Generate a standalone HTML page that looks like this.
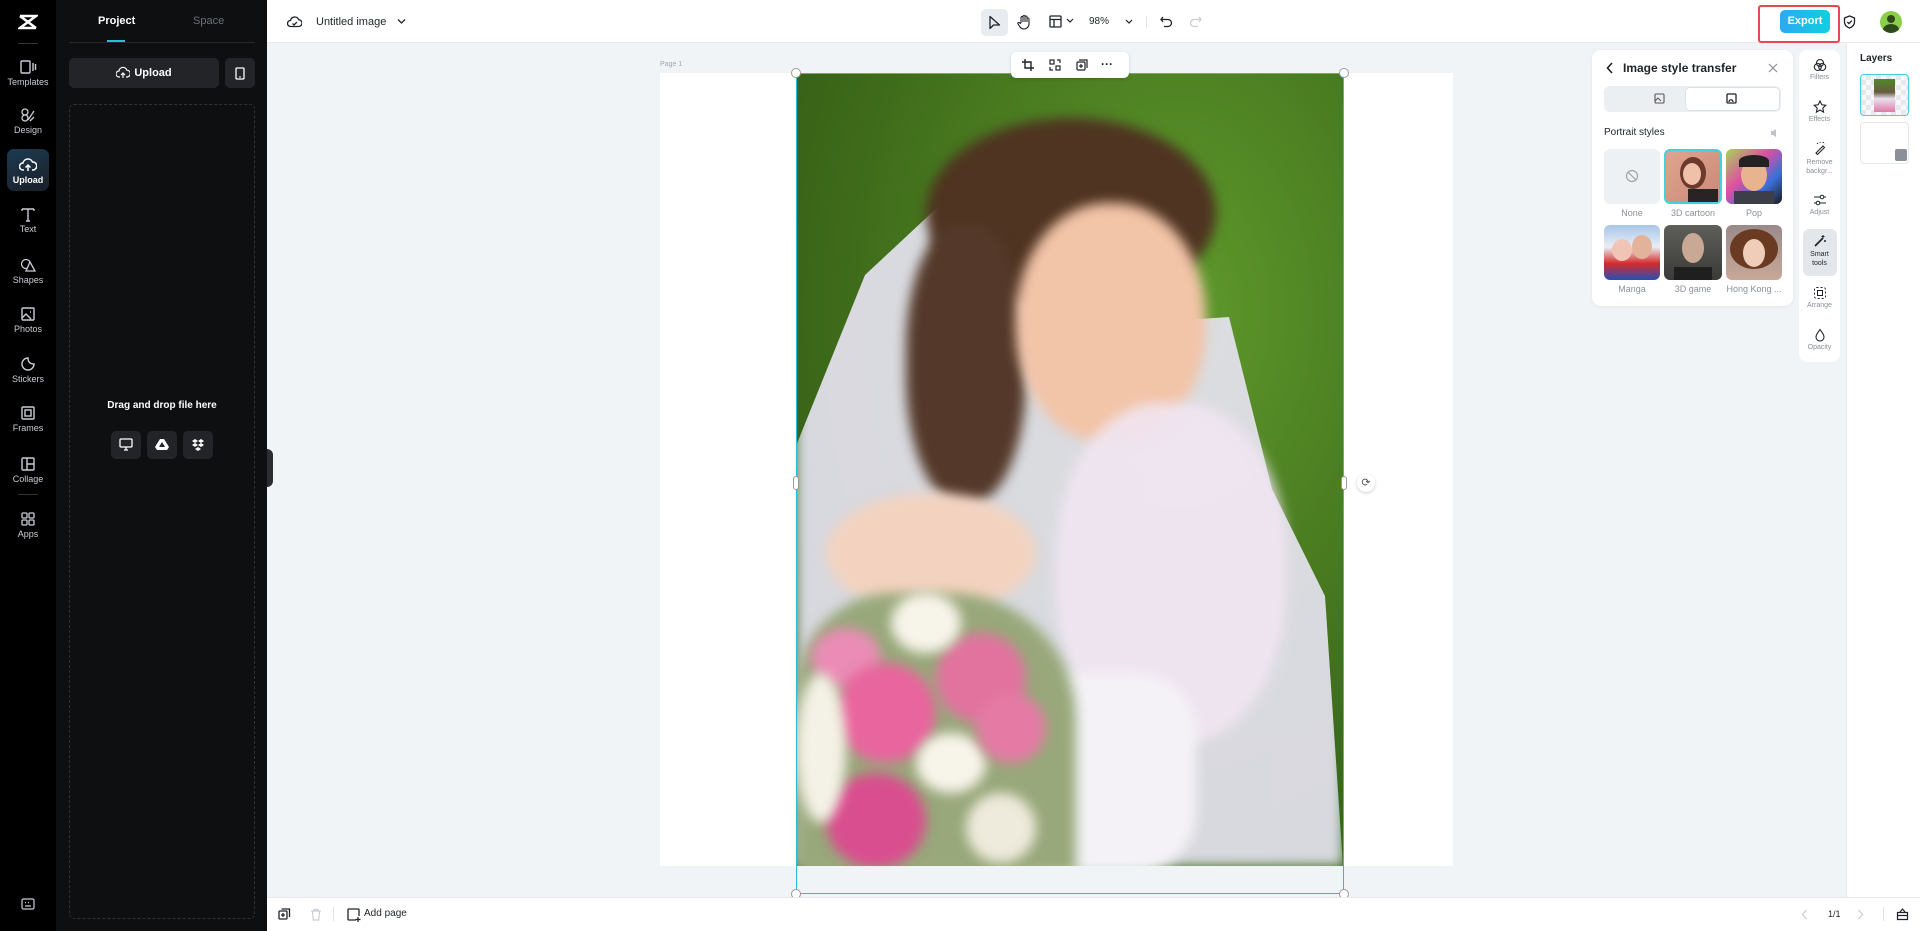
<!DOCTYPE html>
<html><head><meta charset="utf-8"><style>
*{box-sizing:border-box;margin:0;padding:0}
body{width:1920px;height:931px;overflow:hidden;position:relative;background:#f1f4f7;font-family:"Liberation Sans",sans-serif;color:#1f2329}
.a{position:absolute}
.rail{left:0;top:0;width:56px;height:931px;background:#000}
.ri{position:absolute;left:0;width:56px;text-align:center;color:#c9cdd4;font-size:9px}
.ri svg{display:block;margin:0 auto 2px}
.panel{left:56px;top:0;width:211px;height:931px;background:#0e0f11}
.top{left:267px;top:0;width:1653px;height:43px;background:#fff;border-bottom:1px solid #e8eaed}
.tl{position:absolute;text-align:center;font-size:7px;color:#8a8f99;width:41px;left:0}
.tl svg{display:block;margin:0 auto 2px}
.tile{position:absolute;width:56px;height:55px;border-radius:6px;overflow:hidden}
.lab{position:absolute;font-size:9px;color:#8a8f99;width:60px;text-align:center}
.blur{position:absolute;filter:blur(6px)}
</style></head><body>

<!-- left rail -->
<div class="a rail">
  <svg class="a" style="left:18px;top:14px" width="20" height="16" viewBox="0 0 20 16"><path d="M2 2h16L2 14h16M2 2l16 12" stroke="#fff" stroke-width="2.6" fill="none"/></svg>
  <div class="a" style="left:18px;top:43px;width:20px;height:1px;background:#333"></div>
  <div class="ri" style="top:59px"><svg width="18" height="16" viewBox="0 0 18 16"><rect x="2" y="2" width="9" height="12" rx="1" stroke="#c9cdd4" stroke-width="1.4" fill="none"/><path d="M14 4v8M16.5 5v6" stroke="#c9cdd4" stroke-width="1.4"/></svg>Templates</div>
  <div class="ri" style="top:107px"><svg width="18" height="16" viewBox="0 0 18 16"><circle cx="6" cy="5" r="3" stroke="#c9cdd4" stroke-width="1.3" fill="none"/><circle cx="6" cy="11" r="3" stroke="#c9cdd4" stroke-width="1.3" fill="none"/><path d="M9 13l6-9M11 14l4-4" stroke="#c9cdd4" stroke-width="1.3"/></svg>Design</div>
  <div class="a" style="left:7px;top:149px;width:42px;height:42px;border-radius:7px;background:linear-gradient(160deg,#1d3a52,#1a1f27)"></div>
  <div class="ri" style="top:157px;color:#fff;font-weight:bold"><svg width="18" height="16" viewBox="0 0 18 16"><path d="M5 13H4a3.5 3.5 0 010-7 5 5 0 019.5-1A3.5 3.5 0 0114 13h-1M9 14V8M6.5 10.5L9 8l2.5 2.5" stroke="#fff" stroke-width="1.5" fill="none"/></svg>Upload</div>
  <div class="ri" style="top:206px"><svg width="18" height="16" viewBox="0 0 18 16"><path d="M3 3h12M9 3v12M3 3v2M15 3v2M7 15h4" stroke="#c9cdd4" stroke-width="1.4" fill="none"/></svg>Text</div>
  <div class="ri" style="top:257px"><svg width="18" height="16" viewBox="0 0 18 16"><circle cx="7" cy="7" r="4.5" stroke="#c9cdd4" stroke-width="1.3" fill="none"/><path d="M11 5l5 9H7z" stroke="#c9cdd4" stroke-width="1.3" fill="#000"/></svg>Shapes</div>
  <div class="ri" style="top:306px"><svg width="18" height="16" viewBox="0 0 18 16"><rect x="3" y="2" width="12" height="12" rx="1" stroke="#c9cdd4" stroke-width="1.4" fill="none"/><path d="M3 12l4-4 5 5M11 6h1" stroke="#c9cdd4" stroke-width="1.4" fill="none"/></svg>Photos</div>
  <div class="ri" style="top:356px"><svg width="18" height="16" viewBox="0 0 18 16"><path d="M15 8A6 6 0 119 2c0 4 2 6 6 6z" stroke="#c9cdd4" stroke-width="1.4" fill="none"/></svg>Stickers</div>
  <div class="ri" style="top:405px"><svg width="18" height="16" viewBox="0 0 18 16"><rect x="3" y="2" width="12" height="12" rx="1" stroke="#c9cdd4" stroke-width="1.4" fill="none"/><rect x="6" y="5" width="6" height="6" stroke="#c9cdd4" stroke-width="1.4" fill="none"/></svg>Frames</div>
  <div class="ri" style="top:456px"><svg width="18" height="16" viewBox="0 0 18 16"><rect x="3" y="2" width="12" height="12" rx="1" stroke="#c9cdd4" stroke-width="1.4" fill="none"/><path d="M8 2v12M8 8h7" stroke="#c9cdd4" stroke-width="1.4"/></svg>Collage</div>
  <div class="a" style="left:18px;top:494px;width:20px;height:1px;background:#333"></div>
  <div class="ri" style="top:511px"><svg width="18" height="16" viewBox="0 0 18 16"><rect x="3" y="2" width="5" height="5" rx="1" stroke="#c9cdd4" stroke-width="1.3" fill="none"/><rect x="10" y="2" width="5" height="5" rx="1" stroke="#c9cdd4" stroke-width="1.3" fill="none"/><rect x="3" y="9" width="5" height="5" rx="1" stroke="#c9cdd4" stroke-width="1.3" fill="none"/><rect x="10" y="9" width="5" height="5" rx="1" stroke="#c9cdd4" stroke-width="1.3" fill="none"/></svg>Apps</div>
  <svg class="a" style="left:21px;top:898px" width="14" height="12" viewBox="0 0 14 12"><rect x="1" y="1" width="12" height="10" rx="1.5" stroke="#c9cdd4" stroke-width="1.2" fill="none"/><path d="M4 8h6M4 4.5h1M7 4.5h1M10 4.5h0" stroke="#c9cdd4" stroke-width="1.2"/></svg>
</div>

<!-- panel -->
<div class="a panel">
  <div class="a" style="left:42px;top:15px;font-size:11px;font-weight:bold;color:#fff">Project</div>
  <div class="a" style="left:137px;top:15px;font-size:11px;color:#6b7078">Space</div>
  <div class="a" style="left:51px;top:40px;width:18px;height:2px;background:#22c1d6"></div>
  <div class="a" style="left:13px;top:42px;width:186px;height:1px;background:#26282c"></div>
  <div class="a" style="left:13px;top:58px;width:150px;height:30px;border-radius:5px;background:#222428;color:#fff;font-size:11px;font-weight:bold;text-align:center;line-height:30px">
    <svg style="vertical-align:-3px;margin-right:4px" width="14" height="13" viewBox="0 0 14 13"><path d="M4 11H3a3 3 0 010-6 4 4 0 017.8-.8A3 3 0 0111 11h-1M7 12V7M5 9l2-2 2 2" stroke="#fff" stroke-width="1.2" fill="none"/></svg>Upload</div>
  <div class="a" style="left:169px;top:58px;width:30px;height:30px;border-radius:5px;background:#222428"><svg class="a" style="left:10px;top:9px" width="10" height="13" viewBox="0 0 10 13"><rect x="1" y="1" width="8" height="11" rx="1" stroke="#fff" stroke-width="1.3" fill="none"/><path d="M4 10h2" stroke="#fff"/></svg></div>
  <div class="a" style="left:13px;top:104px;width:186px;height:815px;border:1px dashed #2f3237;border-radius:5px"></div>
  <div class="a" style="left:13px;top:400px;width:186px;text-align:center;color:#fff;font-size:10px;font-weight:bold">Drag and drop file here</div>
  <div class="a" style="left:55px;top:431px;width:30px;height:28px;border-radius:5px;background:#222428"><svg class="a" style="left:8px;top:7px" width="14" height="13" viewBox="0 0 14 13"><rect x="1" y="1" width="12" height="8" rx="1" stroke="#fff" stroke-width="1.3" fill="none"/><path d="M5 12h4M7 9v3" stroke="#fff" stroke-width="1.3"/></svg></div>
  <div class="a" style="left:91px;top:431px;width:30px;height:28px;border-radius:5px;background:#222428"><svg class="a" style="left:8px;top:7px" width="14" height="13" viewBox="0 0 14 13"><path d="M5 1h4l5 8-2 3H2L0 9z" fill="#fff"/><path d="M7 4l-3 5h6z" fill="#222428"/></svg></div>
  <div class="a" style="left:127px;top:431px;width:30px;height:28px;border-radius:5px;background:#222428"><svg class="a" style="left:8px;top:7px" width="14" height="13" viewBox="0 0 14 13"><path d="M4 1l3 2-3 2-3-2zM10 1l3 2-3 2-3-2zM4 5l3 2-3 2-3-2zM10 5l3 2-3 2-3-2zM7 9l3 2-3 2-3-2z" fill="#fff"/></svg></div>
</div>
<div class="a" style="left:267px;top:449px;width:6px;height:38px;background:#2a2c30;border-radius:0 6px 6px 0"></div>

<!-- top bar -->
<div class="a top">
  <svg class="a" style="left:20px;top:15px" width="15" height="13" viewBox="0 0 15 13"><path d="M4 11.5H3.5a3 3 0 010-6 4.3 4.3 0 018.2-.8A3 3 0 0111.5 11.5zM5.5 8.5l1.5 1.5 3-3" stroke="#1f2329" stroke-width="1.3" fill="none"/></svg>
  <div class="a" style="left:49px;top:16px;font-size:11px;color:#1f2329">Untitled image</div>
  <svg class="a" style="left:130px;top:18px" width="9" height="7" viewBox="0 0 9 7"><path d="M1 1.5l3.5 3.5 3.5-3.5" stroke="#1f2329" stroke-width="1.3" fill="none"/></svg>
  <div class="a" style="left:714px;top:9px;width:27px;height:27px;border-radius:5px;background:#e8ebef"></div>
  <svg class="a" style="left:721px;top:15px" width="13" height="15" viewBox="0 0 13 15"><path d="M2 1.5v12l3.5-3.5h6z" stroke="#1f2329" stroke-width="1.3" fill="none" stroke-linejoin="round"/></svg>
  <svg class="a" style="left:750px;top:14px" width="14" height="16" viewBox="0 0 14 16"><path d="M4 9V3.5a1 1 0 012 0V8M6 7V2.5a1 1 0 012 0V8M8 7V3a1 1 0 012 0v5M10 7V5a1 1 0 012 0v5a5 5 0 01-5 5 5 5 0 01-4-2l-2-3a1 1 0 011.5-1.3L4 10" stroke="#1f2329" stroke-width="1.1" fill="none"/></svg>
  <svg class="a" style="left:782px;top:15px" width="13" height="13" viewBox="0 0 13 13"><rect x="1" y="1" width="11" height="11" rx="1" stroke="#1f2329" stroke-width="1.3" fill="none"/><path d="M1 4.5h11M5 4.5V12" stroke="#1f2329" stroke-width="1.3"/></svg>
  <svg class="a" style="left:799px;top:18px" width="8" height="6" viewBox="0 0 8 6"><path d="M1 1l3 3 3-3" stroke="#1f2329" stroke-width="1.2" fill="none"/></svg>
  <div class="a" style="left:822px;top:16px;font-size:10px;color:#1f2329">98%</div>
  <svg class="a" style="left:858px;top:19px" width="8" height="6" viewBox="0 0 8 6"><path d="M1 1l3 3 3-3" stroke="#1f2329" stroke-width="1.2" fill="none"/></svg>
  <div class="a" style="left:879px;top:16px;width:1px;height:12px;background:#e0e3e7"></div>
  <svg class="a" style="left:893px;top:16px" width="13" height="12" viewBox="0 0 13 12"><path d="M3 1L1 3.5 3 6M1 3.5h7a3.5 3.5 0 010 7H4" stroke="#1f2329" stroke-width="1.3" fill="none"/></svg>
  <svg class="a" style="left:922px;top:16px" width="13" height="12" viewBox="0 0 13 12"><path d="M10 1l2 2.5L10 6M12 3.5H5a3.5 3.5 0 000 7h4" stroke="#c9cdd4" stroke-width="1.3" fill="none"/></svg>
  <div class="a" style="left:1491px;top:5px;width:82px;height:38px;border:2px solid #e8474c;border-radius:3px"></div>
  <div class="a" style="left:1513px;top:10px;width:50px;height:23px;border-radius:5px;background:linear-gradient(90deg,#2fa9f0,#0fd0e0);color:#fff;font-size:11px;font-weight:bold;text-align:center;line-height:23px">Export</div>
  <svg class="a" style="left:1576px;top:15px" width="13" height="14" viewBox="0 0 13 14"><path d="M6.5 1L1.5 3v4c0 3 2.2 5 5 6 2.8-1 5-3 5-6V3z" stroke="#1f2329" stroke-width="1.3" fill="none"/><path d="M4.3 7l1.6 1.6 3-3" stroke="#1f2329" stroke-width="1.3" fill="none"/></svg>
  <div class="a" style="left:1613px;top:11px;width:22px;height:22px;border-radius:50%;background:#8bce4a;overflow:hidden"><div class="a" style="left:7px;top:4px;width:8px;height:8px;border-radius:50%;background:#2e4a1a"></div><div class="a" style="left:3px;top:13px;width:16px;height:12px;border-radius:50%;background:#2e4a1a"></div></div>
</div>

<!-- page -->
<div class="a" style="left:660px;top:61px;font-size:7px;color:#a0a5ad">Page 1</div>
<div class="a" style="left:660px;top:73px;width:793px;height:793px;background:#fff"></div>
<!-- image -->
<div class="a" style="left:796px;top:73px;width:547px;height:793px;overflow:hidden;background:radial-gradient(ellipse at 70% 30%,#5f9a2c,#3f6c1a 60%,#2f5414)">
  <div class="blur" style="left:0;top:0;width:547px;height:793px;background:#e6e3f0;opacity:.92;clip-path:polygon(0 373px,69px 202px,144px 132px,273px 255px,433px 244px,476px 416px,529px 523px,547px 793px,0 793px)"></div>
  <div class="blur" style="left:130px;top:45px;width:290px;height:190px;border-radius:50%;background:#4f3421"></div>
  <div class="blur" style="left:110px;top:150px;width:120px;height:280px;border-radius:45%;background:#54392a"></div>
  <div class="blur" style="left:220px;top:130px;width:190px;height:240px;border-radius:48%;background:#f2c4a8"></div>
  <div class="blur" style="left:30px;top:420px;width:210px;height:120px;border-radius:50%;background:#f3d3c0"></div>
  <div class="blur" style="left:260px;top:330px;width:230px;height:340px;border-radius:45%;background:#f1e6f2;opacity:.9"></div>
  <div class="blur" style="left:200px;top:600px;width:200px;height:200px;border-radius:30%;background:#f4f2f6"></div>
  <div class="blur" style="left:0;top:520px;width:280px;height:280px;border-radius:35% 45% 0 0;background:#98a87a"></div>
  <div class="blur" style="left:15px;top:555px;width:70px;height:60px;border-radius:50%;background:#ea8cb5"></div>
  <div class="blur" style="left:40px;top:590px;width:100px;height:100px;border-radius:50%;background:#e9659e"></div>
  <div class="blur" style="left:140px;top:560px;width:90px;height:90px;border-radius:50%;background:#e2739f"></div>
  <div class="blur" style="left:30px;top:700px;width:100px;height:95px;border-radius:50%;background:#d94e8e"></div>
  <div class="blur" style="left:0;top:600px;width:50px;height:150px;border-radius:50%;background:#f4f1e6"></div>
  <div class="blur" style="left:95px;top:520px;width:70px;height:60px;border-radius:50%;background:#f7f4ea"></div>
  <div class="blur" style="left:120px;top:660px;width:70px;height:60px;border-radius:50%;background:#f7f4ea"></div>
  <div class="blur" style="left:170px;top:720px;width:70px;height:70px;border-radius:50%;background:#eeeadc"></div>
  <div class="blur" style="left:180px;top:620px;width:70px;height:70px;border-radius:50%;background:#e57aa5"></div>
</div>
<!-- selection -->
<div class="a" style="left:796px;top:73px;width:548px;height:821px;border:1px solid #22c1d6"></div>
<div class="a" style="left:791px;top:68px;width:10px;height:10px;border-radius:50%;background:#fff;border:1px solid #999"></div>
<div class="a" style="left:1339px;top:68px;width:10px;height:10px;border-radius:50%;background:#fff;border:1px solid #999"></div>
<div class="a" style="left:793px;top:476px;width:6px;height:14px;border-radius:3px;background:#fff;border:1px solid #999"></div>
<div class="a" style="left:1341px;top:476px;width:6px;height:14px;border-radius:3px;background:#fff;border:1px solid #999"></div>
<div class="a" style="left:1357px;top:474px;width:18px;height:18px;border-radius:50%;background:#fff;box-shadow:0 1px 3px rgba(0,0,0,.2);font-size:11px;text-align:center;line-height:18px;color:#555">⟳</div>
<div class="a" style="left:791px;top:889px;width:10px;height:10px;border-radius:50%;background:#fff;border:1px solid #999"></div>
<div class="a" style="left:1339px;top:889px;width:10px;height:10px;border-radius:50%;background:#fff;border:1px solid #999"></div>
<!-- float toolbar -->
<div class="a" style="left:1011px;top:52px;width:118px;height:26px;background:#fff;border-radius:5px;box-shadow:0 1px 3px rgba(0,0,0,.15)">
  <svg class="a" style="left:11px;top:7px" width="12" height="12" viewBox="0 0 12 12"><path d="M3 0v9h9M0 3h9v9" stroke="#1f2329" stroke-width="1.4" fill="none"/></svg>
  <svg class="a" style="left:38px;top:7px" width="12" height="12" viewBox="0 0 12 12"><rect x="1" y="1" width="4" height="4" stroke="#1f2329" stroke-width="1.2" fill="none"/><rect x="7" y="7" width="4" height="4" stroke="#1f2329" stroke-width="1.2" fill="none"/><path d="M8 1h3v3M1 8v3h3" stroke="#1f2329" stroke-width="1.2" fill="none"/></svg>
  <svg class="a" style="left:65px;top:7px" width="12" height="12" viewBox="0 0 12 12"><rect x="1" y="3" width="8" height="8" rx="1" stroke="#1f2329" stroke-width="1.2" fill="none"/><path d="M3 1h8v8M5 5v4M3 7h4" stroke="#1f2329" stroke-width="1.2" fill="none"/></svg>
  <div class="a" style="left:90px;top:5px;font-size:12px;font-weight:bold;color:#1f2329">···</div>
</div>

<!-- style panel -->
<div class="a" style="left:1592px;top:50px;width:201px;height:256px;background:#fff;border-radius:9px;box-shadow:0 1px 4px rgba(0,0,0,.06)">
  <svg class="a" style="left:14px;top:12px" width="8" height="12" viewBox="0 0 8 12"><path d="M6 1L1.5 6 6 11" stroke="#1f2329" stroke-width="1.6" fill="none"/></svg>
  <div class="a" style="left:31px;top:11px;font-size:12px;font-weight:bold;color:#1f2329">Image style transfer</div>
  <svg class="a" style="left:176px;top:13px" width="10" height="10" viewBox="0 0 10 10"><path d="M1 1l8 8M9 1l-8 8" stroke="#8a8f99" stroke-width="1.2"/></svg>
  <div class="a" style="left:12px;top:36px;width:177px;height:26px;border-radius:6px;background:#eceff2"></div>
  <div class="a" style="left:93px;top:37px;width:95px;height:24px;border-radius:5px;background:#fff;border:1px solid #dde1e5"></div>
  <svg class="a" style="left:62px;top:43px" width="12" height="12" viewBox="0 0 12 12"><rect x="1" y="1" width="9" height="9" rx="1" stroke="#555" stroke-width="1.1" fill="none"/><path d="M1 8l3-3 3 3" stroke="#555" fill="none"/></svg>
  <svg class="a" style="left:134px;top:43px" width="12" height="12" viewBox="0 0 12 12"><rect x="1" y="1" width="9" height="9" rx="1" stroke="#1f2329" stroke-width="1.3" fill="none"/><path d="M3 9c0-3 4-3 4 0M5 5h0" stroke="#1f2329" stroke-width="1.3" fill="none"/></svg>
  <div class="a" style="left:12px;top:77px;font-size:10px;color:#1f2329">Portrait styles</div>
  <svg class="a" style="left:178px;top:78px" width="9" height="10" viewBox="0 0 9 10"><path d="M1 3h2l3-2v8L3 7H1z" fill="#c0c4ca"/></svg>
  <div class="tile" style="left:12px;top:99px;background:#eef1f4"><svg class="a" style="left:21px;top:20px" width="14" height="14" viewBox="0 0 14 14"><circle cx="7" cy="7" r="5.5" stroke="#a0a5ad" stroke-width="1.2" fill="none"/><path d="M3 3l8 8" stroke="#a0a5ad" stroke-width="1.2"/></svg></div>
  <div class="tile" style="left:72px;top:99px;width:58px;border:2px solid #45d0e0;background:linear-gradient(135deg,#e0a48e,#c98a78);"><div class="a" style="left:14px;top:6px;width:26px;height:32px;border-radius:50%;background:#6b3a2a"></div><div class="a" style="left:17px;top:12px;width:18px;height:22px;border-radius:50%;background:#f0c0a8"></div><div class="a" style="left:22px;top:38px;width:30px;height:18px;background:#2a2326"></div></div>
  <div class="tile" style="left:134px;top:99px;background:linear-gradient(135deg,#a4d65a,#e04fa0 40%,#3b6fd8 70%,#1a1a1a)"><div class="a" style="left:15px;top:10px;width:26px;height:32px;border-radius:50%;background:#e7b48f"></div><div class="a" style="left:13px;top:6px;width:30px;height:12px;border-radius:50% 50% 0 0;background:#222"></div><div class="a" style="left:8px;top:42px;width:40px;height:14px;background:#3c3f48"></div></div>
  <div class="tile" style="left:12px;top:175px;background:linear-gradient(180deg,#a9c6e8,#e9eef5 40%,#d52a2a 70%,#2450b8)"><div class="a" style="left:8px;top:14px;width:20px;height:22px;border-radius:50%;background:#f0c5b8"></div><div class="a" style="left:28px;top:10px;width:20px;height:24px;border-radius:50%;background:#e2b39a"></div></div>
  <div class="tile" style="left:72px;top:175px;width:58px;background:linear-gradient(180deg,#5e5e5a,#3a3a38)"><div class="a" style="left:18px;top:8px;width:22px;height:30px;border-radius:50%;background:#c9a896"></div><div class="a" style="left:10px;top:42px;width:38px;height:14px;background:#1e1f1e"></div></div>
  <div class="tile" style="left:134px;top:175px;background:linear-gradient(180deg,#9a8a8a,#c8a898)"><div class="a" style="left:4px;top:4px;width:48px;height:40px;border-radius:50%;background:#6a3a22"></div><div class="a" style="left:17px;top:14px;width:22px;height:28px;border-radius:50%;background:#f0cdb8"></div></div>
  <div class="lab" style="left:10px;top:158px">None</div>
  <div class="lab" style="left:71px;top:158px">3D cartoon</div>
  <div class="lab" style="left:132px;top:158px">Pop</div>
  <div class="lab" style="left:10px;top:234px">Manga</div>
  <div class="lab" style="left:71px;top:234px">3D game</div>
  <div class="lab" style="left:132px;top:234px">Hong Kong ...</div>
</div>

<!-- tool rail -->
<div class="a" style="left:1799px;top:50px;width:41px;height:312px;background:#fff;border-radius:8px">
  <div class="tl" style="top:8px"><svg width="14" height="14" viewBox="0 0 14 14"><circle cx="7" cy="5" r="3.5" stroke="#1f2329" stroke-width="1.1" fill="none"/><circle cx="4.8" cy="9" r="3.5" stroke="#1f2329" stroke-width="1.1" fill="none"/><circle cx="9.2" cy="9" r="3.5" stroke="#1f2329" stroke-width="1.1" fill="none"/></svg>Filters</div>
  <div class="tl" style="top:50px"><svg width="14" height="14" viewBox="0 0 14 14"><path d="M7 1l1.8 3.8 4 .5-3 2.8.8 4L7 10l-3.6 2.1.8-4-3-2.8 4-.5z" stroke="#1f2329" stroke-width="1.1" fill="none"/></svg>Effects</div>
  <div class="tl" style="top:92px;line-height:9px"><svg width="14" height="14" viewBox="0 0 14 14"><path d="M3 11l7-7 1.5 1.5-7 7z" stroke="#1f2329" stroke-width="1.1" fill="none"/><path d="M4 2a5 5 0 018 0" stroke="#1f2329" stroke-dasharray="1.5 1.5" fill="none"/></svg>Remove<br>backgr...</div>
  <div class="tl" style="top:143px"><svg width="14" height="14" viewBox="0 0 14 14"><path d="M1 4h12M1 10h12" stroke="#1f2329" stroke-width="1.1"/><circle cx="9" cy="4" r="1.8" fill="#fff" stroke="#1f2329"/><circle cx="5" cy="10" r="1.8" fill="#fff" stroke="#1f2329"/></svg>Adjust</div>
  <div class="a" style="left:4px;top:179px;width:34px;height:47px;border-radius:6px;background:#e3e6ea"></div>
  <div class="tl" style="top:184px;color:#1f2329;line-height:9px"><svg width="14" height="14" viewBox="0 0 14 14"><path d="M2 12l8-8" stroke="#1f2329" stroke-width="1.8"/><path d="M10 1v3M8.5 2.5h3M12 6v2M11 7h2" stroke="#1f2329" stroke-width="1"/></svg>Smart<br>tools</div>
  <div class="tl" style="top:236px"><svg width="14" height="14" viewBox="0 0 14 14"><rect x="1.5" y="1.5" width="11" height="11" rx="2" stroke="#1f2329" stroke-dasharray="2 2" fill="none"/><rect x="4.5" y="4.5" width="5" height="5" stroke="#1f2329" fill="none"/></svg>Arrange</div>
  <div class="tl" style="top:278px"><svg width="14" height="14" viewBox="0 0 14 14"><path d="M7 1.5C5 4.5 3 6.5 3 9a4 4 0 008 0c0-2.5-2-4.5-4-7.5z" stroke="#1f2329" stroke-width="1.1" fill="none"/></svg>Opacity</div>
</div>

<!-- layers -->
<div class="a" style="left:1846px;top:43px;width:74px;height:854px;background:#fff;border-left:1px solid #e8eaed">
  <div class="a" style="left:13px;top:10px;font-size:10px;font-weight:bold;color:#1f2329">Layers</div>
  <div class="a" style="left:13px;top:31px;width:49px;height:42px;border:1.5px solid #45d0e0;border-radius:4px;background:repeating-conic-gradient(#e6e8eb 0 25%,#f7f8f9 0 50%) 0 0/10px 10px"><div class="a" style="left:13px;top:4px;width:21px;height:33px;background:linear-gradient(180deg,#4f8a25 0,#6a5a40 40%,#e9e0ef 60%,#e07aa5 100%)"></div></div>
  <div class="a" style="left:13px;top:79px;width:49px;height:42px;border:1.5px solid #e3e6ea;border-radius:4px;background:#fff"><div class="a" style="left:34px;top:26px;width:12px;height:12px;border-radius:2px;background:#8a8f99"></div></div>
</div>

<!-- bottom bar -->
<div class="a" style="left:267px;top:897px;width:1653px;height:34px;background:#fff;border-top:1px solid #e8eaed">
  <svg class="a" style="left:11px;top:10px" width="13" height="13" viewBox="0 0 13 13"><rect x="1" y="3" width="8" height="8" rx="1" stroke="#1f2329" stroke-width="1.3" fill="none"/><path d="M3.5 1h8v8M5 5v4M3 7h4" stroke="#1f2329" stroke-width="1.3" fill="none"/></svg>
  <svg class="a" style="left:43px;top:10px" width="12" height="13" viewBox="0 0 12 13"><path d="M1 3h10M4 3V1.5h4V3M2.5 3l.8 9h5.4l.8-9" stroke="#c9cdd4" stroke-width="1.2" fill="none"/></svg>
  <div class="a" style="left:66px;top:9px;width:1px;height:14px;background:#e0e3e7"></div>
  <svg class="a" style="left:80px;top:10px" width="14" height="14" viewBox="0 0 14 14"><path d="M9 12H2a1 1 0 01-1-1V2a1 1 0 011-1h9a1 1 0 011 1v6M11 9v5M8.5 11.5h5" stroke="#1f2329" stroke-width="1.3" fill="none"/></svg>
  <div class="a" style="left:97px;top:10px;font-size:10px;color:#1f2329">Add page</div>
  <svg class="a" style="left:1534px;top:11px" width="7" height="11" viewBox="0 0 7 11"><path d="M5.5 1L1.5 5.5 5.5 10" stroke="#c9cdd4" stroke-width="1.2" fill="none"/></svg>
  <div class="a" style="left:1561px;top:11px;font-size:9px;color:#1f2329">1/1</div>
  <svg class="a" style="left:1590px;top:11px" width="7" height="11" viewBox="0 0 7 11"><path d="M1.5 1l4 4.5-4 4.5" stroke="#c9cdd4" stroke-width="1.2" fill="none"/></svg>
  <div class="a" style="left:1616px;top:9px;width:1px;height:14px;background:#e0e3e7"></div>
  <svg class="a" style="left:1629px;top:9px" width="13" height="14" viewBox="0 0 13 14"><path d="M4 5l2.5-3L9 5M1.5 5.5h10v7h-10zM1.5 8.5h10" stroke="#1f2329" stroke-width="1.2" fill="none"/></svg>
</div>
</body></html>
